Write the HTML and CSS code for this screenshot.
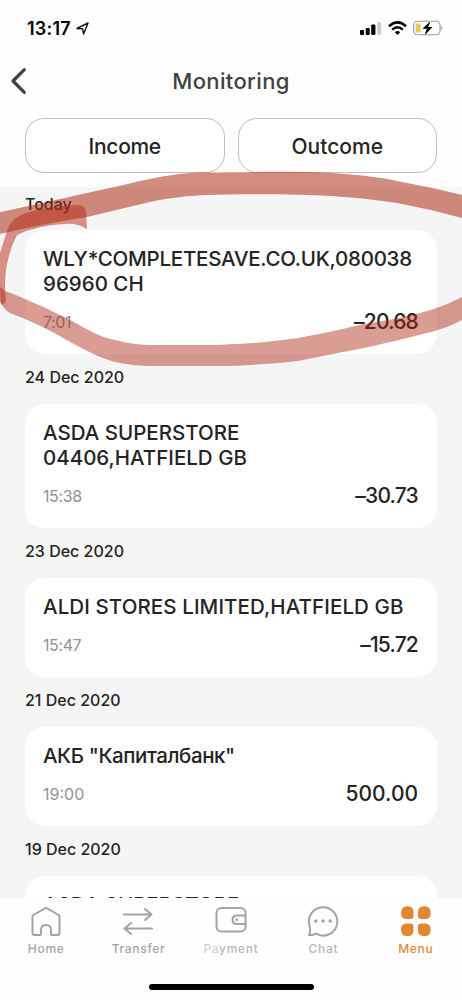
FILE: index.html
```html
<!DOCTYPE html>
<html lang="en">
<head>
<meta charset="utf-8">
<title>Monitoring</title>
<link rel="stylesheet" href="styles.css">
</head>
<body>
<div class="screen">
  <div class="status">
    <div class="status-left"><span class="clock">13:17</span>
      <svg class="location" width="13" height="13" viewBox="0 0 13 13"><path d="M1 6.5 12 1 7.6 12 6.6 6.7Z" fill="none" stroke="#111" stroke-width="1.4" stroke-linejoin="round"/></svg>
    </div>
    <div class="status-right">
      <svg width="22" height="14" viewBox="0 0 22 14"><rect x="0" y="9" width="4" height="5" rx="1"/><rect x="5.7" y="7" width="4" height="7" rx="1"/><rect x="11.2" y="3.5" width="4.2" height="10.5" rx="1"/><rect x="17.2" y="1" width="4" height="13" rx="1" fill="#ccc"/></svg>
      <svg width="19" height="14" viewBox="0 0 19 14"><g fill="none" stroke="#000" stroke-width="2.5"><path d="M1 5.2Q9.500-2.500 18 5.200"/><path d="M4.200 8.600Q9.500 3.800 14.800 8.600"/></g><path d="M6.800 11.200Q9.500 8.900 12.200 11.200L9.500 14Z"/></svg>
      <svg width="31" height="16" viewBox="0 0 31 16"><rect x=".6" y="1.200" width="26.500" height="13.600" rx="4" fill="none" stroke="#999" stroke-width="1.100"/><path d="M28.500 6q2 2 0 4.200Z" fill="#888"/><rect x="2.700" y="3.500" width="5" height="9" rx="1" fill="#e7cc55"/><path d="M17.500 1 9.500 8.800H13.700L11.500 15.500 19.500 7H15.200Z" stroke="#fff" stroke-width="1" paint-order="stroke"/></svg>
    </div>
  </div>
  <header class="header">
    <svg class="back" width="18" height="28" viewBox="0 0 18 28"><path d="M14.300 2.700 3 14 14.300 25.300" fill="none" stroke="#404040" stroke-width="3.200" stroke-linecap="round" stroke-linejoin="round"/></svg>
    <h1 class="title">Monitoring</h1>
  </header>
  <div class="filters"><button class="filter"><span class="income">Income</span></button><button class="filter"><span class="outcome">Outcome</span></button></div>
  <main class="list">
    <div class="date first">Today</div>
    <article class="card"><div class="name"><span class="tight">WLY*COMPLETESAVE.CO.UK,080038</span><br>96960 CH</div><div class="row"><span class="time snug">7:01</span><span class="amount">–20.68</span></div></article>
    <div class="date">24 Dec 2020</div>
    <article class="card"><div class="name">ASDA SUPERSTORE<br>04406,HATFIELD GB</div><div class="row"><span class="time snug">15:38</span><span class="amount">–30.73</span></div></article>
    <div class="date">23 Dec 2020</div>
    <article class="card"><div class="name"><span class="loose">ALDI STORES LIMITED,HATFIELD GB</span></div><div class="row"><span class="time snug">15:47</span><span class="amount">–15.72</span></div></article>
    <div class="date">21 Dec 2020</div>
    <article class="card"><div class="name"><span class="cyrillic">АКБ "Капиталбанк"</span></div><div class="row"><span class="time">19:00</span><span class="amount credit">500.00</span></div></article>
    <div class="date">19 Dec 2020</div>
    <article class="card"><div class="name">ASDA SUPERSTORE</div></article>
  </main>
  <nav class="nav">
    <div class="tab"><svg width="34" height="34" viewBox="0 0 34 34"><path d="M3.500 11.500Q3.500 10.500 4.400 10L15.800 3.400Q17 2.800 18.200 3.400L29.600 10Q30.500 10.500 30.500 11.500V28Q30.500 30 28.500 30H23Q22 30 22 29V25Q22 20 17 20T12 25V29Q12 30 11 30H5.500Q3.500 30 3.500 28Z"/></svg><span>Home</span></div>
    <div class="tab"><svg width="34" height="34" viewBox="0 0 34 34"><path d="M2 9.500H29M23 4 29.500 9.500 23 15M30 23.500H3M9 18 2.500 23.500 9 29"/></svg><span>Transfer</span></div>
    <div class="tab"><svg width="34" height="34" viewBox="0 0 34 34"><rect x="2.500" y="3" width="29" height="23.500" rx="5"/><path d="M31.500 10.500H23Q18.500 10.500 18.500 14.700T23 19H31.500"/><circle class="dot" cx="22.700" cy="14.700" r="1.400"/></svg><span class="light"><i class="faded">Pa</i>yment</span></div>
    <div class="tab"><svg width="34" height="34" viewBox="0 0 34 34"><path d="M3.500 20.500A14.200 14.200 0 1 1 10 28.700Q7 30.500 3 30 5 26 3.500 20.500Z"/><g class="dot"><circle cx="9.800" cy="16" r="1.700"/><circle cx="17" cy="16" r="1.700"/><circle cx="24.200" cy="16" r="1.700"/></g></svg><span class="light">Chat</span></div>
    <div class="tab active"><svg width="34" height="34" viewBox="0 0 34 34"><path d="M8.500 1.200Q14.500 1.200 14.500 7V11Q14.500 14 11.500 14H7.500Q2 14 2 8 2 1.200 8.500 1.200ZM25.500 1.200Q19 1.200 19 7V11Q19 14 22 14H26Q31.700 14 31.700 8 31.700 1.200 25.500 1.200ZM8.500 31.200Q14.500 31.200 14.500 25.500V21.500Q14.500 18.500 11.500 18.500H7.500Q2 18.500 2 24.500 2 31.200 8.500 31.200ZM25.500 31.200Q19 31.200 19 25.500V21.500Q19 18.500 22 18.500H26Q31.700 18.500 31.700 24.500 31.700 31.200 25.500 31.200Z"/></svg><span>Menu</span></div>
  </nav>
  <div class="home-area"><div class="home-bar"></div></div>
  <svg class="marker" width="462" height="1000" viewBox="0 0 462 1000">
    <path class="ink-top" d="M0 212C30 206 60 199 87 193C115 187 135 182 150 179C170 175 185 172.500 205 172.500C250 172 300 171 331 173C360 175 378 177 397 181Q430 187 462 195V218Q430 209 397 203Q365 198 331 196C290 193.500 245 194 205 195C185 196 170 198 150 202L87 217Q42 224 0 234Z"/>
    <path class="ink-low" d="M5 291C25 298 48 309 72 321C90 331 100 337 115 340C130 344 140 345 155 345H215C245 344 270 342 298 338Q332 332 364 324Q400 319 431 310Q447 305 462 297V320Q447 328 431 332Q400 340 364 348Q332 354 298 361C270 364 245 366 215 366H155C140 366 130 365 115 362C98 357 85 350 72 343Q42 325 10 313Q3 309 0 301V287Z"/>
    <path class="ink-hook" d="M78 205Q86 205 86 213L87 229Q77 223 65 224Q38 225 17 235Q9 250 6 270Q4 287 6 300Q4 306 1 304Q0 300 0 284V253Q4 240 8 228Q13 217 26 213Q45 207 78 205Z"/>
  </svg>
</div>
</body>
</html>
```
FILE: styles.css
```css
* { box-sizing: border-box; }
body { margin: 0; font-family: Inter, "Noto Sans", sans-serif; color: #242424; background: #fff; }
.screen { position: relative; width: 462px; height: 1000px; overflow: hidden; display: flex; flex-direction: column; background: #fefefe; }
.status { height: 56px; flex: none; display: flex; justify-content: space-between; align-items: center; padding: 0 18px 0 27px; color: #000; }
.status-left, .status-right { display: flex; align-items: center; }
.status-left { gap: 5px; }
.clock { font-size: 18px; font-weight: 600; letter-spacing: .2px; }
.status-right { gap: 6px; }
.header { height: 62px; flex: none; display: grid; grid-template-columns: 60px 1fr 60px; align-items: center; padding-bottom: 12px; }
.back { margin-left: 10px; }
.title { margin: 0; text-align: center; font-size: 22px; font-weight: 500; letter-spacing: .35px; color: #404040; }
.filters { height: 69px; flex: none; display: flex; gap: 13px; padding: 0 25px 14px; }
.filter { flex: 1; border: 1px solid #bdbdbd; border-radius: 19px; background: #fff; font: 500 21px Inter, sans-serif; color: #242424; padding: 2px 0 0; }
.income { letter-spacing: -.3px; }
.list { height: 711px; flex: none; overflow: hidden; padding: 0 25px; background: #f5f5f5; }
.date { height: 50px; padding-top: 13px; line-height: 20px; font-size: 16px; font-weight: 500; white-space: nowrap; }
.date.first { height: 43px; padding-top: 7px; }
.card { background: #fff; border-radius: 20px; padding: 16px 19px 17.500px 18px; }
.name { font-size: 20.500px; line-height: 25px; font-weight: 500; white-space: nowrap; }
.tight { letter-spacing: -.24px; }
.loose { letter-spacing: .1px; }
.cyrillic { letter-spacing: -.42px; }
.row { height: 30px; margin-top: 10.500px; display: flex; justify-content: space-between; align-items: center; }
.time { font-size: 16px; color: #929292; }
.snug { letter-spacing: -.4px; }
.amount { font-size: 21px; font-weight: 500; letter-spacing: -.8px; }
.amount.credit { letter-spacing: 0; }
.nav { height: 67px; flex: none; display: grid; grid-template-columns: repeat(5, 92.400px); padding-top: 7px; background: #fefefe; }
.tab { display: flex; flex-direction: column; align-items: center; font-size: 12px; font-weight: 500; letter-spacing: .7px; line-height: 20px; color: #a5a5a5; }
.tab svg { fill: none; stroke: #a3a3a3; stroke-width: 2; stroke-linecap: round; stroke-linejoin: round; }
.tab svg .dot { fill: #a3a3a3; stroke: none; }
.light { color: #b8b8b8; }
.faded { font-style: normal; color: #d0d0d0; }
.tab.active { color: #df8c3c; }
.tab.active svg { fill: #e28631; stroke: none; }
.home-area { flex: 1; display: flex; justify-content: center; padding-top: 19px; }
.home-bar { width: 165px; height: 6px; border-radius: 3px; background: #000; }
.marker { position: absolute; left: 0; top: 0; pointer-events: none; }
.ink-top { fill: rgba(170, 38, 15, .53); }
.ink-low { fill: rgba(170, 38, 15, .45); }
.ink-hook { fill: rgba(185, 40, 20, .5); }
```
